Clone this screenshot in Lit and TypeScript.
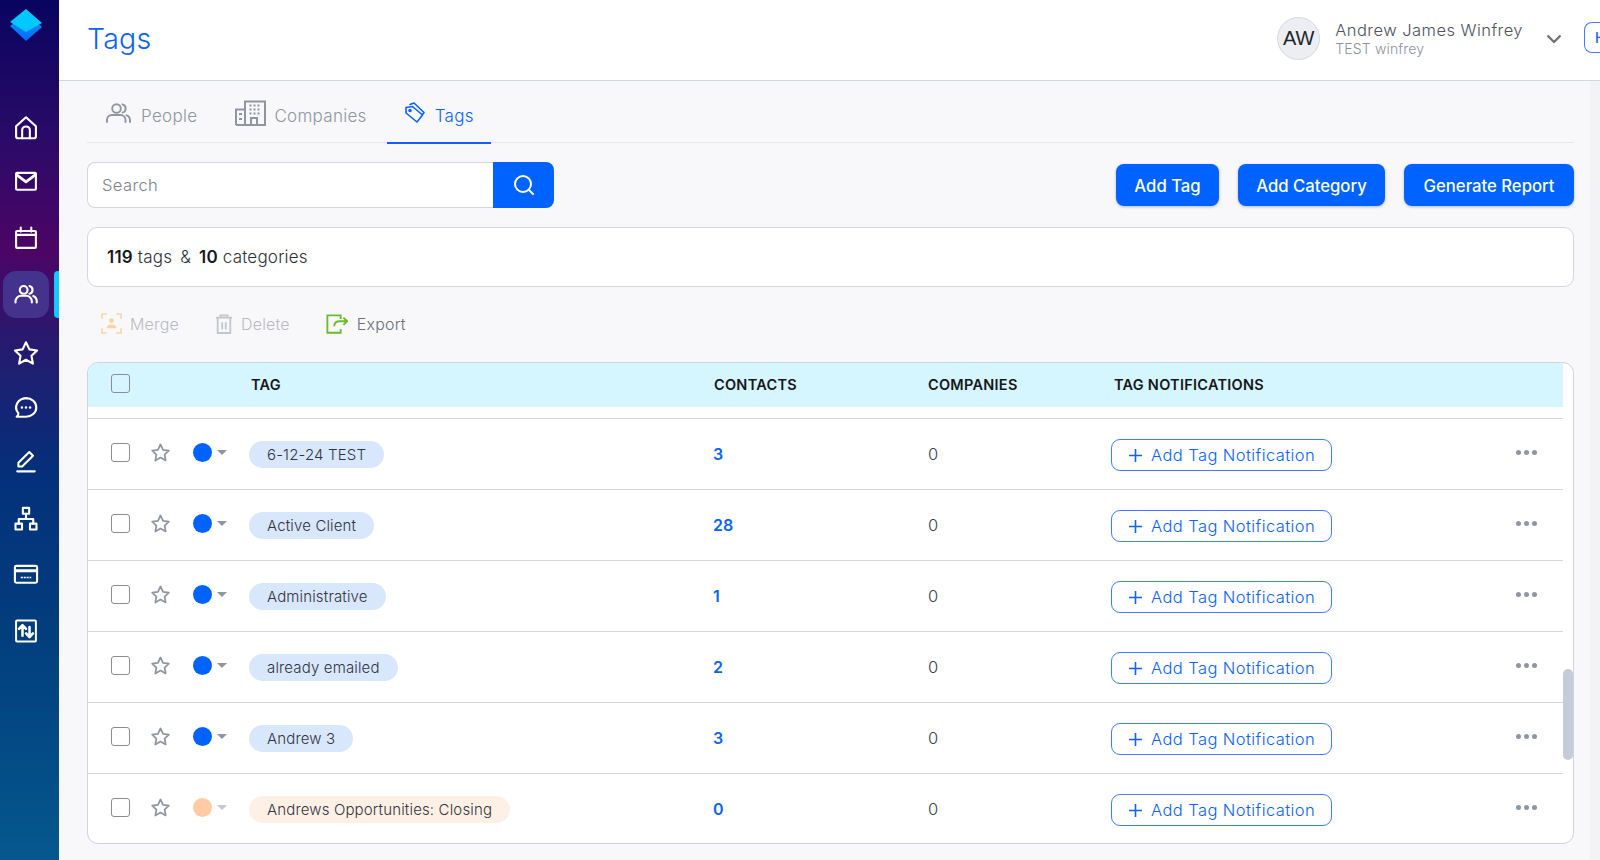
import { LitElement, html, css, svg } from "lit";
import { customElement } from "lit/decorators.js";

const starPath = svg`<path d="m12 2.800 2.900 6.100 6.600.9-4.800 4.600 1.200 6.700-5.900-3.300-5.900 3.300 1.200-6.700L2.500 9.800l6.600-.9z"/>`;

const navIcons = [
  { gap: 0, body: svg`<path d="M3.500 10.500 12 2.800l8.500 7.700V19a1.800 1.800 0 0 1-1.800 1.800H5.300A1.800 1.800 0 0 1 3.500 19z"/><path d="M8.700 20.800V14a3.300 3.300 0 0 1 6.600 0v6.800"/>` },
  { gap: 27, body: svg`<rect x="3.500" y="5" width="17" height="14.500" rx=".8"/><path d="m3.800 6.500 8.200 6.200 8.200-6.200" stroke-width="2.400"/>` },
  { gap: 31, body: svg`<rect x="3.500" y="6" width="17" height="14.500" rx=".8"/><path d="M3.500 9.300h17M7.500 3v3.500M16.500 3v3.500"/>` },
  { gap: 30, body: svg`<circle cx="10" cy="8.500" r="3.300"/><path d="M3 19.300v-1a4.800 4.800 0 0 1 4.800-4.800h4.400a4.800 4.800 0 0 1 4.800 4.800v1M15 5.200a3.400 3.400 0 0 1 0 6.600M18.200 13.700a4.800 4.800 0 0 1 3 4.500v1.100"/>` },
  { gap: 33, body: starPath },
  { gap: 29, body: svg`<path d="M12 3.500a8.800 8 0 0 1 0 16H4c1-.8 1.500-1.800 1.500-3A8.800 8 0 0 1 12 3.500z"/><path d="M8.500 11.500h.01M12 11.500h.01M15.500 11.500h.01" stroke-width="2.200"/>` },
  { gap: 28, body: svg`<path d="M5.500 15.800v-3.100L14.800 3.500l3.200 3.200-9.300 9.100z"/><path d="M4.500 20h15"/>` },
  { gap: 31, body: svg`<rect x="9.300" y="2.500" width="5.400" height="5"/><rect x="3" y="16" width="5.600" height="5"/><rect x="15.400" y="16" width="5.600" height="5"/><path d="M12 7.500V12M5.800 16v-4h12.400v4"/>` },
  { gap: 29, body: svg`<rect x="2.500" y="5" width="19" height="14.500" rx="1.200"/><path d="M3 9.200h18" stroke-width="2.400"/><path d="M7.500 15h9" stroke-width="1.200" stroke-dasharray="1.800 .7" stroke-linecap="butt"/>` },
  { gap: 31, body: svg`<rect x="3.500" y="3" width="17" height="18" rx=".8" stroke-width="1.700"/><path d="M9 16V7.500M6 10.200 9 7l3 3.200M15 8.500V17M12 14l3 3.200 3-3.200" stroke-width="2.200"/>` },
];

const rows = [
  { name: "6-12-24 TEST", contacts: "3", color: "#0062ff", bg: "#d9e7fd", caret: "#8e95a3" },
  { name: "Active Client", contacts: "28", color: "#0062ff", bg: "#d9e7fd", caret: "#8e95a3" },
  { name: "Administrative", contacts: "1", color: "#0062ff", bg: "#d9e7fd", caret: "#8e95a3" },
  { name: "already emailed", contacts: "2", color: "#0062ff", bg: "#d9e7fd", caret: "#8e95a3" },
  { name: "Andrew 3", contacts: "3", color: "#0062ff", bg: "#d9e7fd", caret: "#8e95a3" },
  { name: "Andrews Opportunities: Closing", contacts: "0", color: "#ffcba4", bg: "#fff0e5", caret: "#c3c7cf" },
];

@customElement("app-root")
export class AppRoot extends LitElement {
  static styles = css`
    :host { display: flex; width: 1600px; height: 860px; overflow: hidden; background: #f8f8fa; font-family: "Inter", "Liberation Sans", sans-serif; color: #3a3f4b; }
    .side { width: 59px; flex: none; display: flex; flex-direction: column; align-items: center; background: linear-gradient(180deg, #08045f 0%, #2a0a68 16%, #4c0565 29%, #261a6f 40%, #04307a 55%, #023f7e 75%, #05588f 100%); color: #fff; }
    .logo { margin: 9px 7px 74px 0; display: block; }
    .nav { display: flex; flex-direction: column; align-items: center; width: 100%; }
    .nav-item { position: relative; width: 100%; height: 26px; display: flex; align-items: center; justify-content: center; padding-right: 7px; box-sizing: border-box; }
    .nav-item.active::before { content: ""; position: absolute; left: 3px; top: -10px; width: 46px; height: 47px; border-radius: 13px; background: #43338c; }
    .nav-item.active::after { content: ""; position: absolute; right: 0; top: -10px; width: 5px; height: 47px; border-radius: 4px 0 0 4px; background: #12c8ff; }
    .nav-item svg { position: relative; flex: none; }
    .main { flex: 1; min-width: 0; display: flex; flex-direction: column; }
    .top { height: 81px; flex: none; box-sizing: border-box; background: #fff; border-bottom: 1px solid #cfd6e4; display: flex; align-items: center; padding: 0 0 3px 28px; }
    h1 { margin: 0; font-size: 28.500px; font-weight: 300; color: #0a62ff; letter-spacing: .2px; flex: 1; }
    .user { display: flex; align-items: center; }
    .avatar { width: 43px; height: 43px; box-sizing: border-box; border-radius: 50%; background: #eceef3; border: 1px solid #d5d8de; display: flex; align-items: center; justify-content: center; font-size: 20px; color: #22252c; margin-right: 15px; font-family: "Liberation Sans", sans-serif; }
    .uname { font-size: 16.500px; font-weight: 300; color: #4c5260; line-height: 20px; letter-spacing: .46px; white-space: nowrap; }
    .usub { font-size: 14px; font-weight: 300; color: #8b919d; line-height: 18px; letter-spacing: .15px; }
    .chev { color: #6e6e72; margin: 0 22px 0 23px; display: block; }
    .h-btn { width: 16px; height: 31px; overflow: hidden; border: 1px solid #3d7eff; border-right: 0; border-radius: 8px 0 0 8px; color: #0a62ff; font-size: 14px; font-weight: 500; padding: 5px 0 0 10px; box-sizing: border-box; line-height: 19px; margin-top: -2px; }
    .body { flex: 1; min-height: 0; display: flex; justify-content: space-between; }
    .content { width: 1487px; margin-left: 28px; flex: none; display: flex; flex-direction: column; }
    .page-sb { width: 10px; flex: none; background: #f3f3f5; }
    .tabs { height: 62px; flex: none; box-sizing: border-box; display: flex; align-items: flex-start; border-bottom: 1px solid #e6e7ec; }
    .tab { display: flex; align-items: center; gap: 11px; font-size: 17px; font-weight: 300; color: #8f95a1; padding: 8px 18px 0; height: 62px; box-sizing: border-box; letter-spacing: .3px; }
    .tab svg { margin-bottom: 6px; flex: none; }
    .tab.t1 { padding-left: 19px; gap: 10px; }
    .tab.t2 { padding-left: 20px; gap: 8px; }
    .tab.on { color: #0a62ff; border-bottom: 2px solid #0a62ff; height: 63px; width: 104px; gap: 10px; margin-left: 2px; }
    .tools { display: flex; justify-content: space-between; align-items: center; margin-top: 19px; height: 46px; flex: none; }
    .search { display: flex; height: 46px; }
    .sinput { width: 406px; box-sizing: border-box; height: 46px; background: #fff; border: 1px solid #d3d6dd; border-right: 0; border-radius: 8px 0 0 8px; font-size: 16.500px; font-weight: 300; color: #7c818c; display: flex; align-items: center; padding-left: 14px; letter-spacing: .4px; }
    .sbtn { width: 61px; height: 46px; background: #0062ff; color: #fff; border-radius: 0 8px 8px 0; display: flex; align-items: center; justify-content: center; }
    .btns { display: flex; gap: 19px; }
    .btn { height: 42px; box-sizing: border-box; padding-top: 2px; border-radius: 8px; background: #0062ff; color: #fff; font-size: 16.700px; font-weight: 500; display: flex; align-items: center; justify-content: center; box-shadow: 0 1px 3px rgba(0,0,0,.25); }
    .counts { margin-top: 19px; height: 60px; flex: none; box-sizing: border-box; background: #fff; border: 1px solid #d3d7e1; border-radius: 10px; display: flex; align-items: center; padding-left: 19px; font-size: 17px; font-weight: 300; color: #2b2f38; gap: 5px; letter-spacing: .2px; }
    .counts b { font-weight: 600; color: #15171c; }
    .counts .amp { margin: 0 3px; }
    .actions { display: flex; align-items: center; height: 75px; box-sizing: border-box; padding: 0 0 2px 14px; flex: none; font-size: 16px; font-weight: 300; color: #b8bbc2; letter-spacing: .18px; }
    .act { display: flex; align-items: center; gap: 8px; margin-right: 36px; }
    .act.on { color: #6a6e77; gap: 9px; }
    .table { position: relative; flex: none; height: 482px; box-sizing: border-box; border: 1px solid #cfd3df; border-radius: 11px; background: #fff; overflow: hidden; }
    .cols { display: grid; grid-template-columns: 54px 40px 67px 465px 214px 186px 1fr 76px; }
    .thead { height: 44px; padding-bottom: 2px; box-sizing: border-box; margin-right: 10px; background: #d6f6ff; align-items: center; font-size: 14.500px; font-weight: 600; color: #15171c; letter-spacing: .27px; }
    .thead .th-tag { grid-column: 4; padding-left: 2px; }
    .check { width: 19px; height: 19px; box-sizing: border-box; border: 1px solid #8a8d95; border-radius: 3px; background: #fff; margin-left: 23px; }
    .thead .check { background: transparent; margin-top: -1px; grid-column: 1; }
    .gap { height: 11px; }
    .row { height: 71px; margin-right: 10px; box-sizing: border-box; border-top: 1px solid #d3d6e2; align-items: center; }
    .row .check { margin-top: -4px; }
    .star { color: #8e95a3; margin: -4px 0 0 8px; display: block; }
    .dotwrap { display: flex; align-items: center; gap: 5px; margin: -4px 0 0 11px; }
    .dot { width: 19px; height: 19px; border-radius: 50%; }
    .caret { width: 0; height: 0; border: 5px solid transparent; border-bottom: 0; border-top-width: 5px; }
    .pill { justify-self: start; height: 27px; border-radius: 14px; padding: 0 18px; display: flex; align-items: center; font-size: 15px; font-weight: 300; color: #30343f; white-space: nowrap; letter-spacing: .15px; }
    .contacts { font-size: 16px; font-weight: 600; color: #0a62ff; margin-left: -1px; }
    .comp { font-size: 16.500px; font-weight: 300; color: #3a3f4b; }
    .notif { display: flex; align-items: center; width: 221px; height: 32px; box-sizing: border-box; border: 1px solid #3d7eff; border-radius: 9px; color: #0a62ff; font-size: 16.500px; font-weight: 300; padding-left: 16px; gap: 8px; margin: 2px 0 0 -3px; white-space: nowrap; letter-spacing: .42px; }
    .more { display: flex; gap: 3px; margin-top: -4px; padding-left: 29px; }
    .more i { width: 5px; height: 5px; border-radius: 50%; background: #8e95a3; }
    .thumb { position: absolute; right: 0; top: 306px; width: 10px; height: 91px; border-radius: 5px; background: #c5cbd9; }
  `;

  render() {
    return html`
      <aside class="side">
        <svg class="logo" width="32" height="32" viewBox="0 0 32 32"><defs><linearGradient id="lg" x1="0" y1="0" x2="0" y2="1"><stop offset="0" stop-color="#0a8cf5"/><stop offset="1" stop-color="#0a66fa"/></linearGradient></defs><path d="M0 17 5 13.500h22l5 4.500-16 14z" fill="url(#lg)"/><path d="M16 0 32 14 16 23 0 13z" fill="#03c8ff"/></svg>
        <nav class="nav">
          ${navIcons.map((n, i) => html`<div class="nav-item ${i === 3 ? "active" : ""}" style="margin-top:${n.gap}px"><svg width="28" height="28" viewBox="0 0 24 24" fill="none" stroke="currentColor" stroke-width="1.800" stroke-linecap="round" stroke-linejoin="round">${n.body}</svg></div>`)}
        </nav>
      </aside>
      <div class="main">
        <header class="top">
          <h1>Tags</h1>
          <div class="user">
            <div class="avatar">AW</div>
            <div>
              <div class="uname">Andrew James Winfrey</div>
              <div class="usub">TEST winfrey</div>
            </div>
            <svg class="chev" width="16" height="10" viewBox="0 0 16 10" fill="none" stroke="currentColor" stroke-width="2.200"><path d="m1.500 1.500 6.500 6.500 6.500-6.500"/></svg>
            <div class="h-btn">H</div>
          </div>
        </header>
        <div class="body">
          <div class="content">
            <div class="tabs">
              <div class="tab t1">
                <svg width="25" height="20" viewBox="0 0 25 20" fill="none" stroke="currentColor" stroke-width="1.900" stroke-linecap="round"><circle cx="10.500" cy="5.500" r="4.300"/><path d="M1 19v-2a5 5 0 0 1 5-5h8.500a5 5 0 0 1 5 5v2M16.500 1.300a4.300 4.300 0 0 1 0 8.300M20.500 12.300a5 5 0 0 1 3.500 4.700v2"/></svg>
                People
              </div>
              <div class="tab t2">
                <svg width="31" height="26" viewBox="0 0 31 26" fill="none" stroke="currentColor" stroke-width="2"><path d="M1 25V9.500h9V25M10 25V1.500h20V25H1z"/><path d="M14.500 5.500h2M18.500 5.500h2M22.500 5.500h2M14.500 9.500h2M18.500 9.500h2M22.500 9.500h2M14.500 13.500h2M18.500 13.500h2M22.500 13.500h2M4 14h3M4 19h3"/><path d="M16 25v-7h6v7"/></svg>
                Companies
              </div>
              <div class="tab on">
                <svg width="20" height="21" viewBox="0 0 20 21" fill="none" stroke="currentColor" stroke-width="1.600" stroke-linejoin="round" stroke-linecap="round"><path d="M1 5.500v5.500l11 9 5.500-7L7.500 4.500z"/><path d="M5 2.500 9 1l10 9.500-1.500 2"/><circle cx="5" cy="8.500" r="1" fill="currentColor"/></svg>
                Tags
              </div>
            </div>
            <div class="tools">
              <div class="search">
                <div class="sinput">Search</div>
                <div class="sbtn"><svg width="24" height="24" viewBox="0 0 24 24" fill="none" stroke="currentColor" stroke-width="2" stroke-linecap="round"><circle cx="11" cy="11" r="8"/><path d="m17 17 4 4"/></svg></div>
              </div>
              <div class="btns">
                <div class="btn" style="width:103px">Add Tag</div>
                <div class="btn" style="width:147px">Add Category</div>
                <div class="btn" style="width:170px">Generate Report</div>
              </div>
            </div>
            <div class="counts"><b>119</b> tags <span class="amp">&amp;</span> <b>10</b> categories</div>
            <div class="actions">
              <div class="act">
                <svg width="21" height="21" viewBox="0 0 22 22" fill="none" stroke="#f7d5a0" stroke-width="1.600"><path d="M1 6V1h5M16 1h5v5M21 16v5h-5M6 21H1v-5"/><circle cx="11" cy="8" r="2.500" fill="#f7d5a0" stroke="none"/><path d="M6 16c0-3 2.500-4 5-4s5 1 5 4z" fill="#f7d5a0" stroke="none"/></svg>
                Merge
              </div>
              <div class="act">
                <svg width="18" height="20" viewBox="0 0 20 22" fill="none" stroke="#c4c6cb" stroke-width="2"><path d="M1 4h18M6 4V1.500h8V4M3 4v17h14V4M8 9v8M12 9v8"/></svg>
                Delete
              </div>
              <div class="act on">
                <svg width="22" height="20" viewBox="0 0 24 21" fill="none" stroke="#6cbb2a" stroke-width="2"><path d="M16 5V1H1.500v19H16v-4"/><path d="M9 13c0-4 3-5.500 6-5.500h7M19 3.500l4 4-4 4"/></svg>
                Export
              </div>
            </div>
            <div class="table">
              <div class="cols thead">
                <div class="check"></div>
                <div class="th-tag">TAG</div>
                <div>CONTACTS</div>
                <div>COMPANIES</div>
                <div>TAG NOTIFICATIONS</div>
              </div>
              <div class="gap"></div>
              ${rows.map((r) => html`
                <div class="cols row">
                  <div class="check"></div>
                  <svg class="star" width="21" height="21" viewBox="0 0 24 24" fill="none" stroke="currentColor" stroke-width="2" stroke-linejoin="round">${starPath}</svg>
                  <div class="dotwrap">
                    <div class="dot" style="background:${r.color}"></div>
                    <div class="caret" style="border-top-color:${r.caret}"></div>
                  </div>
                  <div class="pill" style="background:${r.bg}">${r.name}</div>
                  <div class="contacts">${r.contacts}</div>
                  <div class="comp">0</div>
                  <div class="notif">
                    <svg width="15" height="15" viewBox="0 0 15 15" stroke="currentColor" stroke-width="1.600"><path d="M7.500 1v13M1 7.500h13"/></svg>
                    Add Tag Notification
                  </div>
                  <div class="more"><i></i><i></i><i></i></div>
                </div>
              `)}
              <div class="thumb"></div>
            </div>
          </div>
          <div class="page-sb"></div>
        </div>
      </div>
    `;
  }
}
